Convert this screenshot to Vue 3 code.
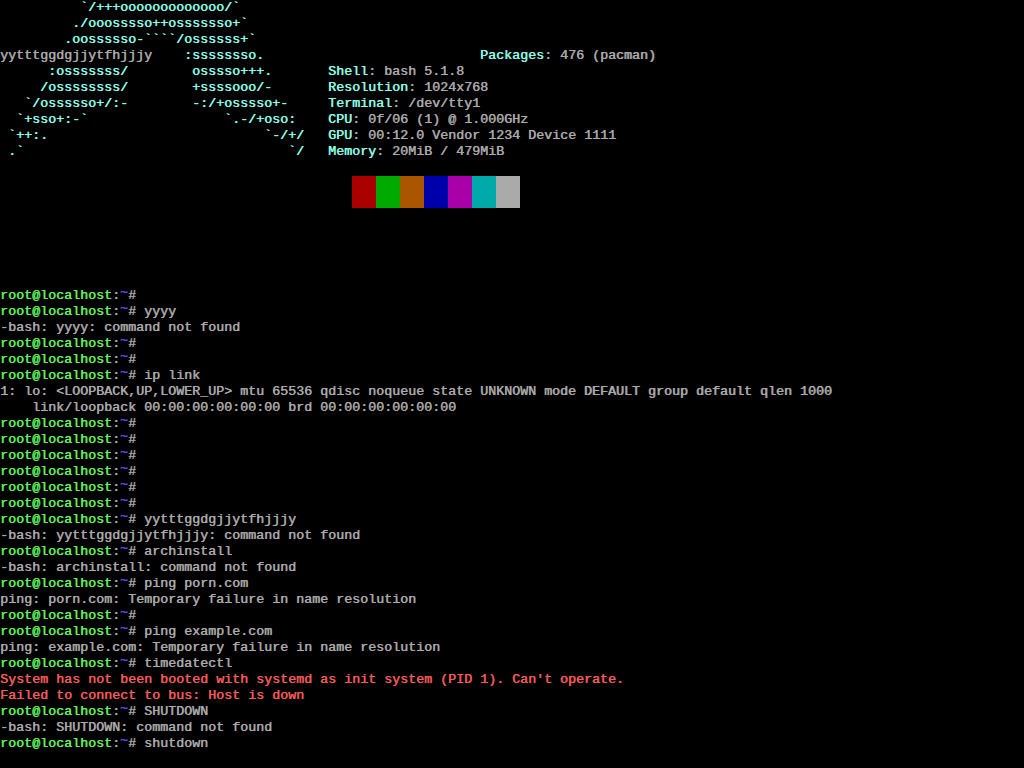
<script setup>
const at = (parts) => {
  let col = 0
  const out = []
  for (const [c, text, cls] of parts) {
    out.push({ text: ' '.repeat(Math.max(0, c - col)) + text, cls })
    col = c + text.length
  }
  return out
}
const info = (label, value) => [[41, label, 'cy'], [41 + label.length, ': ' + value, 'gr']]
const top = [
  [[10, '`/+++ooooooooooooo/`', 'cy']],
  [[9, './ooosssso++osssssso+`', 'cy']],
  [[8, '.oossssso-````/ossssss+`', 'cy']],
  [[0, 'yytttggdgjjytfhjjjy', 'gr'], [23, ':ssssssso.', 'cy'], [60, 'Packages', 'cy'], [68, ': 476 (pacman)', 'gr']],
  [[6, ':osssssss/', 'cy'], [24, 'osssso+++.', 'cy'], ...info('Shell', 'bash 5.1.8')],
  [[5, '/ossssssss/', 'cy'], [24, '+ssssooo/-', 'cy'], ...info('Resolution', '1024x768')],
  [[3, '`/ossssso+/:-', 'cy'], [24, '-:/+osssso+-', 'cy'], ...info('Terminal', '/dev/tty1')],
  [[2, '`+sso+:-`', 'cy'], [28, '`.-/+oso:', 'cy'], ...info('CPU', '0f/06 (1) @ 1.000GHz')],
  [[1, '`++:.', 'cy'], [33, '`-/+/', 'cy'], ...info('GPU', '00:12.0 Vendor 1234 Device 1111')],
  [[1, '.`', 'cy'], [36, '`/', 'cy'], ...info('Memory', '20MiB / 479MiB')],
].map(at)
const swatches = ['#aa0000', '#00aa00', '#aa5500', '#0000aa', '#aa00aa', '#00aaaa', '#aaaaaa']
const p = (cmd = '') => [
  { text: 'root@localhost', cls: 'gn' },
  { text: ':', cls: 'gr' },
  { text: '~', cls: 'bl' },
  { text: '# ' + cmd, cls: 'gr' },
]
const o = (text, cls = 'gr') => [{ text, cls }]
const term = [
  p(), p('yyyy'), o('-bash: yyyy: command not found'), p(), p(), p('ip link'),
  o('1: lo: <LOOPBACK,UP,LOWER_UP> mtu 65536 qdisc noqueue state UNKNOWN mode DEFAULT group default qlen 1000'),
  o('    link/loopback 00:00:00:00:00:00 brd 00:00:00:00:00:00'),
  p(), p(), p(), p(), p(), p(), p('yytttggdgjjytfhjjjy'),
  o('-bash: yytttggdgjjytfhjjjy: command not found'), p('archinstall'),
  o('-bash: archinstall: command not found'), p('ping porn.com'),
  o('ping: porn.com: Temporary failure in name resolution'), p(), p('ping example.com'),
  o('ping: example.com: Temporary failure in name resolution'), p('timedatectl'),
  o("System has not been booted with systemd as init system (PID 1). Can't operate.", 'rd'),
  o('Failed to connect to bus: Host is down', 'rd'), p('SHUTDOWN'),
  o('-bash: SHUTDOWN: command not found'), p('shutdown'),
]
</script>

<template>
  <main class="screen">
    <div class="block">
      <div v-for="(row, i) in top" :key="i" class="row">
        <span v-for="(s, j) in row" :key="j" :class="s.cls">{{ s.text }}</span>
      </div>
    </div>
    <div class="swatches">
      <i v-for="c in swatches" :key="c" class="swatch" :style="{ background: c }"></i>
    </div>
    <div class="block term">
      <div v-for="(row, i) in term" :key="i" class="row">
        <span v-for="(s, j) in row" :key="j" :class="s.cls">{{ s.text }}</span>
      </div>
    </div>
  </main>
</template>

<style scoped>
.screen {
  width: 1024px;
  height: 768px;
  overflow: hidden;
  background: #000;
  font-family: "Liberation Mono", monospace;
  font-size: 13.333px;
  font-weight: 400;
  line-height: 16px;
}
.row {
  height: 16px;
  white-space: pre;
}
.row span {
  text-shadow: 0.6px 0 0 currentColor;
}
.swatches {
  display: flex;
  margin: 16px 0 0 352px;
}
.swatch {
  display: block;
  width: 24px;
  height: 32px;
}
.term {
  margin-top: 80px;
}
.cy { color: #8cffe6; }
.gr { color: #aaaaaa; }
.gn { color: #60f060; }
.bl { color: #5555ff; line-height: 0; vertical-align: 3px; }
.rd { color: #f45a5a; }
</style>

<style>
html, body { background: #000; }
</style>
